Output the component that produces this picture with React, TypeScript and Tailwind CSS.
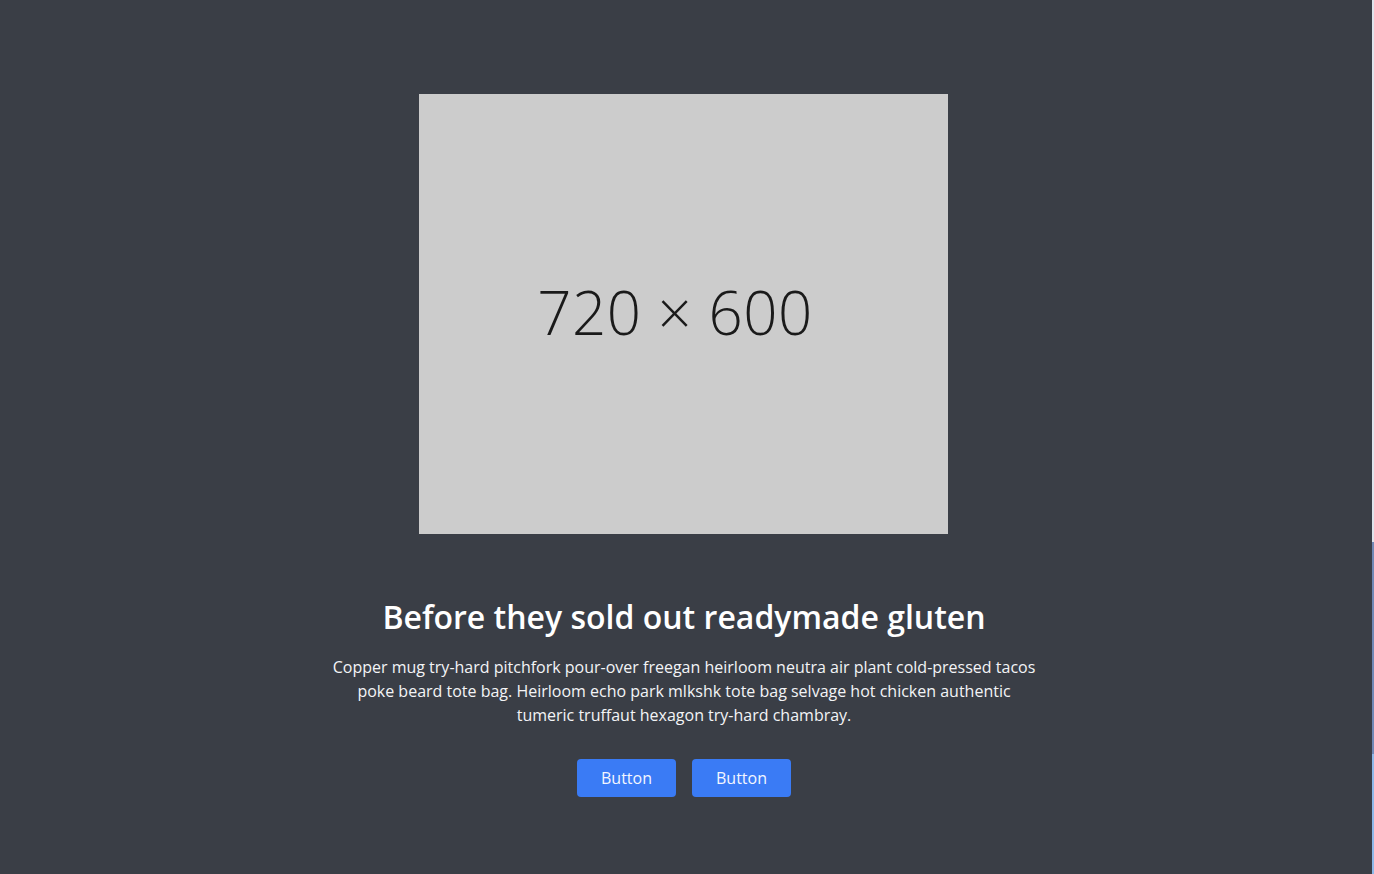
import React from 'react'

function Placeholder() {
    return (
        <div className='w-[529px] h-[440px] mr-[1px] bg-[#cccccc] flex items-center justify-center'>
            <span className='text-[60px] font-light text-[#1a1a1a] tracking-[0.5px] leading-none mt-[-4px] mr-[17px]'>720 × 600</span>
        </div>
    )
}

function App() {
    return (
        <div className='flex w-full h-[874px] overflow-hidden' style={{ fontFamily: '"Open Sans", "Noto Sans", sans-serif' }}>
            <section className='flex-1 bg-[#3a3e46] pr-[4px]'>
                <div className='flex flex-col items-center pt-[94px]'>
                    <Placeholder />
                    <h1 className='mt-[63px] text-[32px] leading-[40px] font-semibold text-white'>
                        Before they sold out readymade gluten
                    </h1>
                    <p className='mt-[18px] w-[708px] text-center text-base leading-6 text-[#f3f4f6]'>
                        Copper mug try-hard pitchfork pour-over freegan heirloom neutra air plant cold-pressed tacos poke beard tote bag. Heirloom echo park mlkshk tote bag selvage hot chicken authentic tumeric truffaut hexagon try-hard chambray.
                    </p>
                    <div className='flex gap-4 mt-8'>
                        <button className='w-[99px] h-[38px] rounded bg-[#3a7bf5] text-[#f3f6ff] text-base'>Button</button>
                        <button className='w-[99px] h-[38px] rounded bg-[#3a7bf5] text-[#f3f6ff] text-base'>Button</button>
                    </div>
                </div>
            </section>
            {/* thin edge strip on the right */}
            <div className='w-[2px] flex flex-col'>
                <div className='h-[542px] bg-[#dfe4ec]'></div>
                <div className='h-[212px] bg-[#7089b6]'></div>
                <div className='flex-1 bg-[#8cb9ea]'></div>
            </div>
        </div>
    )
}

export default App
